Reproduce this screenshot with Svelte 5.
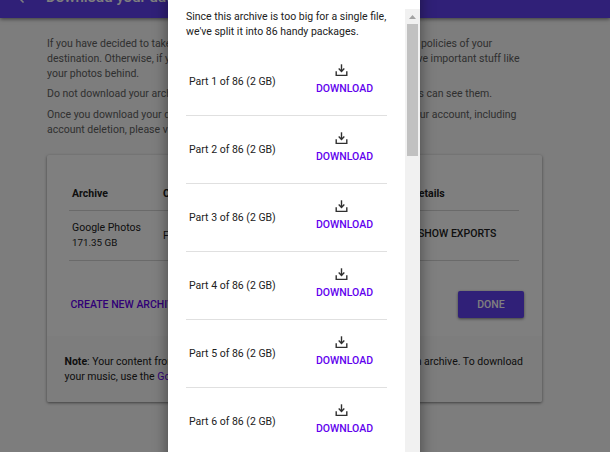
<script>
  // width: where the line ends, measured from the left edge of the text block
  const intro = [
    [
      { start: "If you have decided to take your", end: "policies of your", width: 445 },
      { start: "destination. Otherwise, if you", end: "leave important stuff like", width: 472.5 },
      { start: "your photos behind.", end: "", width: 473 }
    ],
    [{ start: "Do not download your archive", end: "others can see them.", width: 445 }],
    [
      { start: "Once you download your data", end: "your account, including", width: 469.5 },
      { start: "account deletion, please visit", end: "", width: 469 }
    ]
  ];

  const total = 86;
  const parts = [1, 2, 3, 4, 5, 6];
</script>

<div class="screen">
  <header>
    <svg class="back" viewBox="0 0 24 24"><path d="M20 11H7.8l5.6-5.6L12 4l-8 8 8 8 1.4-1.4L7.8 13H20z" /></svg>
    <h1>Download your data</h1>
  </header>

  <main>
    <div class="intro">
      {#each intro as paragraph}
        <div class="paragraph">
          {#each paragraph as line}
            <div class="line" style:width="{line.width}px">
              <span>{line.start}</span>
              <span>{line.end}</span>
            </div>
          {/each}
        </div>
      {/each}
    </div>

    <section class="card">
      <div class="table">
        <div class="row head">
          <span>Archive</span>
          <span>Created on</span>
          <span>Details</span>
        </div>
        <div class="row">
          <span class="name">Google Photos<br /><small>171.35 GB</small></span>
          <span class="date">February</span>
          <span class="exports">SHOW EXPORTS</span>
        </div>
      </div>
      <div class="actions">
        <button class="create">CREATE NEW ARCHIVE</button>
        <button class="done">DONE</button>
      </div>
      <div class="note">
        <div class="line">
          <span><b>Note</b>: Your content from</span>
          <span>an archive. To download</span>
        </div>
        <div class="line">
          <span>your music, use the <a href="#music">Google</a></span>
        </div>
      </div>
    </section>
  </main>

  <div class="scrim"></div>

  <div class="dialog">
    <div class="content">
      <p>Since this archive is too big for a single file,<br />we've split it into {total} handy packages.</p>
      {#each parts as part}
        <div class="part">
          <span>Part {part} of {total} (2 GB)</span>
          <button class="download">
            <svg viewBox="0 0 13 13">
              <path d="M1.2 7.2v4.2h10.6V7.2" />
              <path d="M6.5.3v7" />
              <path class="tip" d="M3.2 4.9l.9-.8 2.4 2.2 2.4-2.2.9.8-3.3 3.5z" />
            </svg>
            DOWNLOAD
          </button>
        </div>
      {/each}
    </div>
    <div class="scrollbar">
      <svg viewBox="0 0 15 15"><path d="M4 10l3.5-4L11 10z" /></svg>
      <div class="thumb"></div>
    </div>
  </div>
</div>

<style>
  :global(body) {
    margin: 0;
    overflow: hidden;
  }

  .screen {
    position: relative;
    width: 610px;
    height: 452px;
    overflow: hidden;
    background: #fafafa;
    color: #212121;
    font: 10.5px/15px Roboto, "Liberation Sans", sans-serif;
  }

  button {
    padding: 0;
    border: 0;
    background: none;
    font: 500 10.5px/15px Roboto, "Liberation Sans", sans-serif;
    white-space: nowrap;
  }

  header {
    display: flex;
    height: 18px;
    background: #6040f0;
    color: #fff;
    box-shadow: 0 1px 4px rgba(0, 0, 0, 0.55);
  }

  .back {
    width: 18px;
    height: 18px;
    margin: -12px 14px 0;
    fill: #fff;
  }

  h1 {
    margin: -13px 0 0;
    font-size: 15px;
    line-height: 20px;
    font-weight: 500;
  }

  main {
    padding: 18px 68px 0 47px;
  }

  .intro {
    height: 119px;
    color: #616161;
  }

  .paragraph {
    margin-bottom: 6px;
  }

  .paragraph:first-child {
    margin-bottom: 5px;
  }

  .line {
    display: flex;
    justify-content: space-between;
    white-space: nowrap;
  }

  .card {
    height: 247px;
    border-radius: 2px;
    background: #fff;
    box-shadow: 0 1px 3px rgba(0, 0, 0, 0.5);
  }

  .table {
    padding: 20px 23px 0 22px;
  }

  .row {
    display: grid;
    grid-template-columns: 91px 249px 1fr;
    align-items: center;
    height: 49px;
    padding-left: 3px;
    border-bottom: 1px solid #d4d4d4;
  }

  .head {
    height: 33px;
    padding-top: 2px;
    font-weight: 700;
  }

  small {
    font-size: 9.8px;
  }

  .name {
    padding-bottom: 2px;
  }

  .exports {
    padding: 0 0 5px 6px;
    font-weight: 500;
  }

  .actions {
    display: flex;
    justify-content: space-between;
    padding: 30px 18px 0 23.5px;
  }

  .create {
    color: #6200ee;
  }

  .done {
    width: 66px;
    height: 27px;
    border-radius: 2px;
    background: #6040f0;
    color: #fff;
    box-shadow: 0 1px 3px rgba(0, 0, 0, 0.5);
  }

  .note {
    box-sizing: border-box;
    height: 66px;
    margin-top: 18px;
    padding: 18px 19px 0 17.5px;
    border-radius: 0 0 2px 2px;
    background: #fafafa;
  }

  a {
    color: #6200ee;
    text-decoration: none;
  }

  .scrim {
    position: absolute;
    inset: 0;
    background: rgba(0, 0, 0, 0.5);
  }

  .dialog {
    position: absolute;
    top: -40px;
    left: 168px;
    display: flex;
    box-sizing: border-box;
    width: 252px;
    height: 560px;
    padding-top: 49px;
    background: #fff;
    box-shadow: 0 4px 14px rgba(0, 0, 0, 0.45);
  }

  .content {
    flex: 1;
    padding: 0 18px;
  }

  .content p {
    margin: 0 0 9px;
    white-space: nowrap;
  }

  .part {
    display: flex;
    justify-content: space-between;
    align-items: center;
    box-sizing: border-box;
    height: 68px;
    padding: 0 14px 0 3px;
    border-bottom: 1px solid #e0e0e0;
  }

  .download {
    display: flex;
    flex-direction: column;
    align-items: center;
    padding-bottom: 4px;
    color: #6200ee;
  }

  .download svg {
    width: 13px;
    height: 13px;
    margin: 0 6px 4px 0;
    fill: none;
    stroke: #303030;
    stroke-width: 1.4;
  }

  .download .tip {
    fill: #303030;
    stroke: none;
  }

  .scrollbar {
    width: 15px;
    background: #f1f1f1;
  }

  .scrollbar svg {
    display: block;
    width: 15px;
    height: 15px;
    fill: #a3a3a3;
  }

  .thumb {
    width: 11px;
    height: 132px;
    margin: 0 2px;
    background: #c1c1c1;
  }
</style>
